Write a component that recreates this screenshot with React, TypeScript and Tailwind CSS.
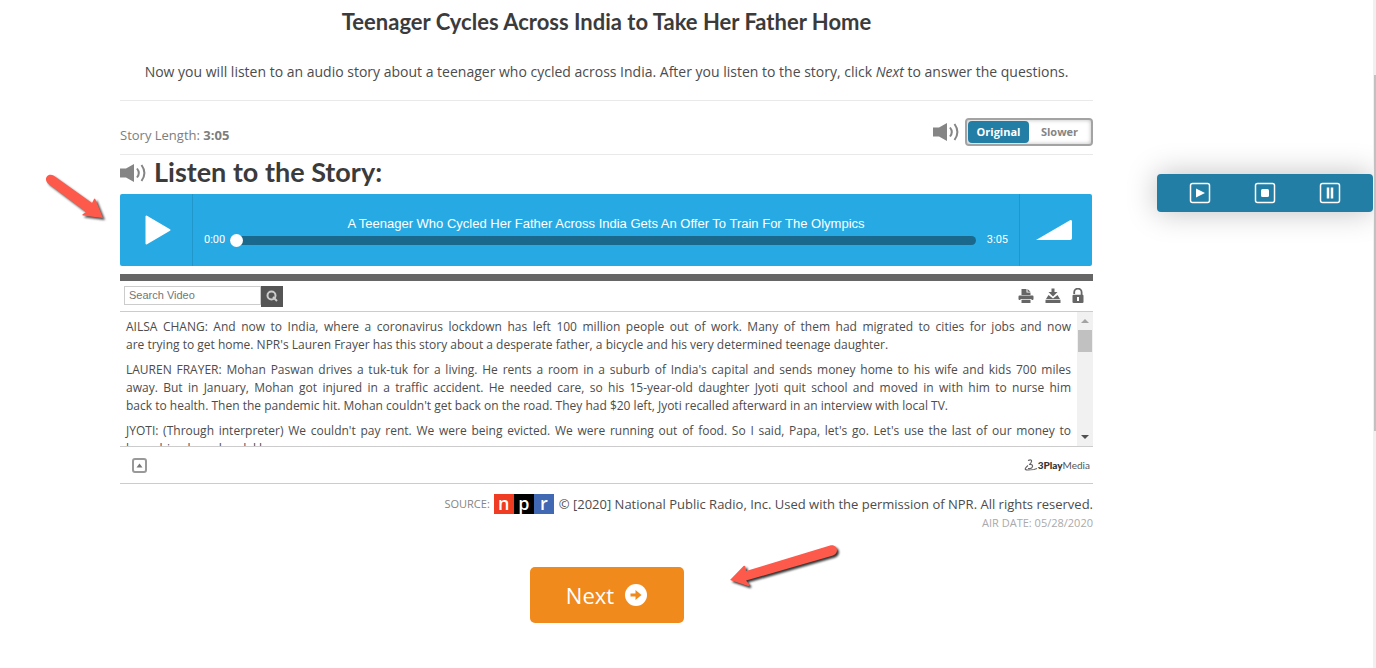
import { useState } from 'react'

// caption paragraphs, one string per caption line
const transcript = [
  [
    'AILSA CHANG: And now to India, where a coronavirus lockdown has left 100 million people out of work. Many of them had migrated to cities for jobs and now',
    "are trying to get home. NPR's Lauren Frayer has this story about a desperate father, a bicycle and his very determined teenage daughter.",
  ],
  [
    "LAUREN FRAYER: Mohan Paswan drives a tuk-tuk for a living. He rents a room in a suburb of India's capital and sends money home to his wife and kids 700 miles",
    'away. But in January, Mohan got injured in a traffic accident. He needed care, so his 15-year-old daughter Jyoti quit school and moved in with him to nurse him',
    "back to health. Then the pandemic hit. Mohan couldn't get back on the road. They had $20 left, Jyoti recalled afterward in an interview with local TV.",
  ],
  [
    "JYOTI: (Through interpreter) We couldn't pay rent. We were being evicted. We were running out of food. So I said, Papa, let's go. Let's use the last of our money to",
    'buy a bicycle and pedal home.',
  ],
]

const speeds = ['Original', 'Slower']

function SpeakerIcon() {
  return (
    <svg aria-hidden="true" viewBox="0 0 27 20" className="h-5 w-[27px] shrink-0">
      <path d="M0 5.500h6L14 1v18l-8-4.500H0z" fill="#858585" />
      <path
        d="M17 5.500q3.600 4.500 0 9M21.500 2q5.800 8 0 16"
        fill="none"
        stroke="#858585"
        strokeWidth="2"
      />
    </svg>
  )
}

function StoryHeader() {
  const [speed, setSpeed] = useState('Original')

  return (
    <div className="flex h-[54px] items-center justify-between border-b border-[#e9e9e9]">
      <p className="pt-4 text-[13px] text-[#7d7d7d]">
        Story Length: <b>3:05</b>
      </p>
      <div className="flex items-center gap-[5px] pt-2">
        <SpeakerIcon />
        <div className="flex h-7 w-32 rounded border-2 border-[#a3a3a3] p-px shadow-[inset_0_0_4px_#bbb]">
          {speeds.map((name) => (
            <button
              key={name}
              type="button"
              aria-pressed={speed === name}
              onClick={() => setSpeed(name)}
              className={`w-1/2 rounded text-[11px] leading-5 font-bold ${
                speed === name ? 'bg-[#227ea4] text-white' : 'text-[#858585]'
              }`}
            >
              {name}
            </button>
          ))}
        </div>
      </div>
    </div>
  )
}

function Player() {
  return (
    <section
      aria-label="Audio player"
      className="mr-px flex h-[72px] rounded-xs bg-[#27aae3] text-white"
    >
      <button
        type="button"
        aria-label="Play"
        className="flex w-[73px] items-center justify-center border-r border-[#2096cb] pl-1"
      >
        <svg aria-hidden="true" viewBox="0 0 26 30" className="h-[30px] w-[26px]">
          <path
            d="M1.500 1.500v27L24.500 15z"
            fill="#fff"
            stroke="#fff"
            strokeWidth="2"
            strokeLinejoin="round"
          />
        </svg>
      </button>
      <div className="flex flex-1 flex-col justify-center px-[11px]">
        <p className="pt-1 text-center font-[Liberation_Sans,sans-serif] text-[13px] leading-4">
          A Teenager Who Cycled Her Father Across India Gets An Offer To Train For The Olympics
        </p>
        <div className="flex items-center gap-[5px] font-[Roboto,sans-serif] text-[11px] leading-4">
          <span>0:00</span>
          <input
            type="range"
            aria-label="Seek"
            min={0}
            max={185}
            defaultValue={0}
            className="h-[9px] min-w-0 flex-1 appearance-none rounded-full bg-[#1a698c] [&::-webkit-slider-thumb]:h-[13px] [&::-webkit-slider-thumb]:w-[13px] [&::-webkit-slider-thumb]:appearance-none [&::-webkit-slider-thumb]:rounded-full [&::-webkit-slider-thumb]:bg-white"
          />
          <span className="pl-[6px]">3:05</span>
        </div>
      </div>
      <button
        type="button"
        aria-label="Volume"
        className="flex w-[73px] items-center justify-center border-l border-[#2096cb] pr-[5px]"
      >
        <svg aria-hidden="true" viewBox="0 0 38 22" className="h-[22px] w-[38px]">
          <path d="M1 21 35 1.200Q37 .2 37 2.500V19q0 2-2 2z" fill="#fff" />
        </svg>
      </button>
    </section>
  )
}

function TranscriptToolbar() {
  return (
    <div className="flex h-[31px] items-center justify-between border-b border-[#ccc] pr-[9px] pl-1">
      <form role="search" className="flex items-start" onSubmit={(e) => e.preventDefault()}>
        <input
          type="search"
          aria-label="Search Video"
          placeholder="Search Video"
          className="h-[19px] w-[137px] border border-[#ccc] px-1 font-[Liberation_Sans,sans-serif] text-[11px] placeholder:text-[#757575]"
        />
        <button
          type="submit"
          aria-label="Search"
          className="flex h-[21px] w-[22px] items-center justify-center bg-[#555]"
        >
          <svg aria-hidden="true" viewBox="0 0 12 12" className="h-3 w-3">
            <circle cx="5.500" cy="5.500" r="4" fill="none" stroke="#ccc" strokeWidth="2" />
            <path d="m7 7 4 4" stroke="#ccc" strokeWidth="2" />
          </svg>
        </button>
      </form>
      <div className="flex items-center gap-[11px] text-[#666]">
        <button type="button" aria-label="Print transcript">
          <svg aria-hidden="true" viewBox="0 0 16 16" className="block h-4 w-4" fill="currentColor">
            <path d="M3.500 1h5v3.500h4V7h-9zM9.500 1l3 2.700h-3z" />
            <path d="M1.500 7.500h13q1 0 1 1V11q0 1-1 1h-1v-1h-11v1h-1q-1 0-1-1V8.500q0-1 1-1z" />
            <path d="M3.500 11.700h9V15h-9z" />
          </svg>
        </button>
        <button type="button" aria-label="Download transcript">
          <svg aria-hidden="true" viewBox="0 0 16 16" className="block h-4 w-4" fill="currentColor">
            <path d="M6.500 .5h3V4h3L8 8.500 3.500 4h3z" />
            <path d="M3.500 7 1 11h14l-2.500-4L8 10.500zM.5 11.700h15V15H.5z" />
          </svg>
        </button>
        <button type="button" aria-label="Lock scrolling">
          <svg aria-hidden="true" viewBox="0 0 12 16" className="block h-4 w-3">
            <path
              d="M2.200 6V4.300a3.600 3.600 0 0 1 7.400 0V7"
              fill="none"
              stroke="currentColor"
              strokeWidth="1.800"
            />
            <rect x=".5" y="6.700" width="11" height="8.300" rx="1" fill="currentColor" />
            <path d="M6 9v4" stroke="#fff" strokeWidth="2" />
          </svg>
        </button>
      </div>
    </div>
  )
}

function Transcript() {
  return (
    <section aria-label="Transcript" className="mt-2 border-t-[7px] border-[#666]">
      <TranscriptToolbar />
      <div className="flex h-[135px] border-b border-[#ccc]">
        <div className="flex-1 overflow-hidden px-[6px] pt-[6px] text-[12px] leading-[18px] text-[#4c4c4c]">
          {transcript.map((lines) => (
            <p key={lines[0]} className="mb-[7px]">
              {lines.map((line) => (
                <span
                  key={line}
                  className="block [text-align-last:justify] last:[text-align-last:left]"
                >
                  {line}
                </span>
              ))}
            </p>
          ))}
        </div>
        <div aria-hidden="true" className="flex w-4 flex-col items-center bg-[#f1f1f1]">
          <svg viewBox="0 0 8 4" className="my-[7px] h-1 w-2">
            <path d="m0 4 4-4 4 4z" fill="#a3a3a3" />
          </svg>
          <div className="h-[22px] w-[14px] bg-[#c1c1c1]" />
          <svg viewBox="0 0 8 4" className="mt-auto mb-[7px] h-1 w-2">
            <path d="m0 0 4 4 4-4z" fill="#505050" />
          </svg>
        </div>
      </div>
      <div className="flex h-[37px] items-center justify-between border-b border-[#ccc] pr-[3px] pl-3">
        <button type="button" aria-label="Collapse transcript">
          <svg aria-hidden="true" viewBox="0 0 15 15" className="block h-[15px] w-[15px]">
            <rect x="1" y="1" width="13" height="13" rx="2" fill="none" stroke="#999" strokeWidth="2" />
            <path d="m4.500 9.500 3-4 3 4z" fill="#777" />
          </svg>
        </button>
        <a
          href="#3play"
          className="flex items-center font-[Lato,sans-serif] text-[10px] leading-4 text-[#555]"
        >
          <svg aria-hidden="true" viewBox="0 0 14 12" className="h-3 w-[14px]">
            <path
              d="M4 1.500q4-1.500 3.500 1T5 5.500q4-.5 3.500 2T4 9.500M4 6.500Q.5 9.500 1.500 10.500t8.500 0l3-1"
              fill="none"
              stroke="#666"
              strokeWidth="1.200"
            />
          </svg>
          <span>
            <b className="font-black text-[#333]">3Play</b>Media
          </span>
        </a>
      </div>
    </section>
  )
}

function NprLogo() {
  return (
    <span aria-label="npr" role="img" className="flex text-[18px] leading-[18px] font-semibold text-white">
      <span className="h-5 w-5 bg-[#f03c23] text-center">n</span>
      <span className="h-5 w-5 bg-black text-center">p</span>
      <span className="h-5 w-5 bg-[#4168b3] text-center">r</span>
    </span>
  )
}

function SpeechToolbar() {
  return (
    <div
      role="toolbar"
      aria-label="Read aloud"
      className="flex h-[38px] items-center justify-center gap-[43px] rounded bg-[#227ea4] shadow-[0_0_30px_rgba(0,0,0,0.25)]"
    >
      <button type="button" aria-label="Play">
        <svg aria-hidden="true" viewBox="0 0 22 22" className="block h-[22px] w-[22px]">
          <rect x="1.500" y="1.500" width="19" height="19" rx="2" fill="none" stroke="#fff" strokeWidth="1.500" />
          <path d="M7 6.500v9l9-4.500z" fill="#fff" />
        </svg>
      </button>
      <button type="button" aria-label="Stop">
        <svg aria-hidden="true" viewBox="0 0 22 22" className="block h-[22px] w-[22px]">
          <rect x="1.500" y="1.500" width="19" height="19" rx="2" fill="none" stroke="#fff" strokeWidth="1.500" />
          <rect x="7" y="7" width="8" height="8" rx="1.500" fill="#fff" />
        </svg>
      </button>
      <button type="button" aria-label="Pause">
        <svg aria-hidden="true" viewBox="0 0 22 22" className="block h-[22px] w-[22px]">
          <rect x="1.500" y="1.500" width="19" height="19" rx="2" fill="none" stroke="#fff" strokeWidth="1.500" />
          <path d="M9 5.500v11M13 5.500v11" stroke="#fff" strokeWidth="2.500" />
        </svg>
      </button>
    </div>
  )
}

export default function App() {
  return (
    <div className="relative flex min-h-screen bg-white font-[Open_Sans,sans-serif] text-[#4c4c4c]">
      <main className="min-w-0 flex-1 pt-2 pb-10 pl-[120px]">
        <h1 className="text-center font-[Lato,sans-serif] text-[22px] leading-7 font-bold text-[#3b3b3b]">
          Teenager Cycles Across India to Take Her Father Home
        </h1>
        <p className="mt-6 border-b border-[#e9e9e9] pb-4 text-center text-[14px] leading-6">
          Now you will listen to an audio story about a teenager who cycled across India. After you
          listen to the story, click <em>Next</em> to answer the questions.
        </p>

        <StoryHeader />

        <h2 className="flex h-[39px] items-center gap-[7px] pb-1 font-[Lato,sans-serif] text-[27px] font-bold text-[#3b3b3b]">
          <SpeakerIcon />
          Listen to the Story:
        </h2>
        <Player />
        <Transcript />

        <footer className="pt-[9px] text-right">
          <div className="flex items-center justify-end text-[13px] leading-[22px]">
            <span className="pr-1 text-[11px] text-[#858585]">SOURCE:</span>
            <NprLogo />
            <span className="pl-[5px]">
              © [2020] National Public Radio, Inc. Used with the permission of NPR. All rights
              reserved.
            </span>
          </div>
          <p className="text-[11px] leading-4 text-[#aaa]">AIR DATE: 05/28/2020</p>
        </footer>

        <div className="mt-9 flex justify-center">
          <button
            type="button"
            className="flex h-14 w-[154px] items-center justify-center gap-[11px] rounded-[5px] bg-[#f08a1d] text-[22px] text-white"
          >
            Next
            <svg aria-hidden="true" viewBox="0 0 22 22" className="h-[22px] w-[22px]">
              <circle cx="11" cy="11" r="11" fill="#fff" />
              <path d="M5.500 9.500h5V6l6 5-6 5v-3.500h-5z" fill="#f08a1d" />
            </svg>
          </button>
        </div>
      </main>

      <aside className="ml-16 w-[216px] shrink-0 pt-[174px]">
        <SpeechToolbar />
      </aside>

      <div aria-hidden="true" className="w-[3px] shrink-0 bg-[#f0f0f0] pt-[75px] pl-px">
        <div className="h-[356px] bg-[#c1c1c1]" />
      </div>

      {/* pointers laid over the page */}
      <svg
        aria-hidden="true"
        viewBox="0 0 70 60"
        className="pointer-events-none absolute top-[170px] left-10 h-[60px] w-[70px] drop-shadow-[2px_2px_1px_rgba(0,0,0,0.7)]"
      >
        <path
          d="M13.500 5.500 52 33l2-4q1-1 1.500.5L63 48l-20-2.500q-1.500-.5 0-1.500l3-2L8 13.500C3 9 8 2.500 13.500 5.500z"
          fill="#fe5a4b"
        />
      </svg>
      <svg
        aria-hidden="true"
        viewBox="0 0 120 60"
        className="pointer-events-none absolute top-[540px] left-[725px] h-[60px] w-[120px] drop-shadow-[2px_2px_1px_rgba(0,0,0,0.8)]"
      >
        <path
          d="M105 5.500 21 31l-.5-4q-.5-2-2-1L5 40l18 6q2 0 1-2l-3-3.500 87-25c7-2.500 4-12-3-10z"
          fill="#fe5a4b"
        />
      </svg>
    </div>
  )
}
